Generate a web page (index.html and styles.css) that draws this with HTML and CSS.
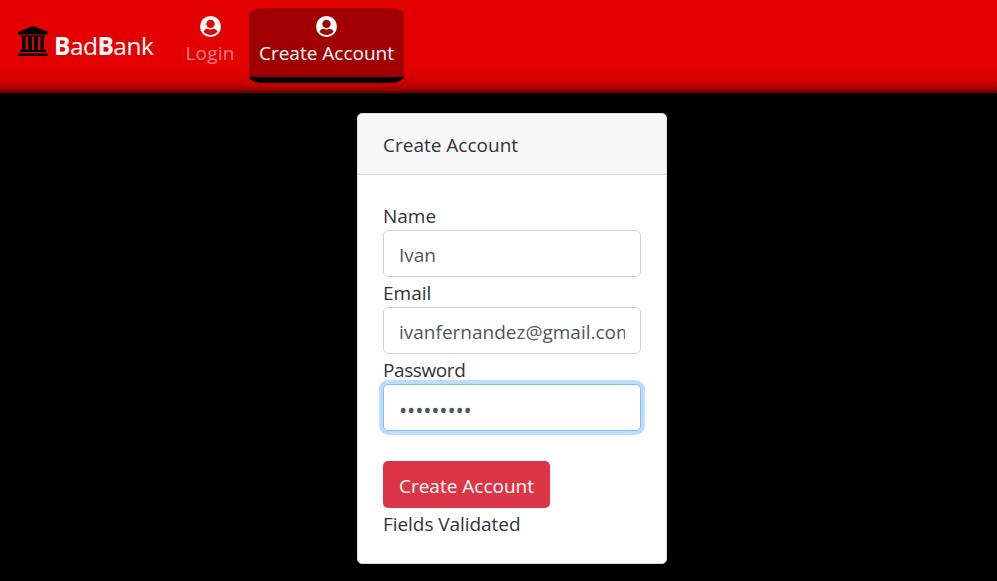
FILE: index.html
```html
<!DOCTYPE html>
<html lang="en">
<head>
<meta charset="utf-8">
<title>BadBank</title>
<link rel="stylesheet" href="styles.css">
</head>
<body>
<nav class="navbar">
  <a class="brand">
    <svg class="bank" viewBox="0 0 30 30"><path d="M15 0 30 6v2.500H0V6zM3 9.500h24v1.500H3zM4 11h3.500v13H4zM10 11h4v13h-4zM16 11h4v13h-4zM22.500 11H26v13h-3.500zM2 24h26v2H2zM0 27.500h30V30H0z"/></svg>
    <span class="brand-name"><b>B</b>ad<b>B</b>ank</span>
  </a>
  <a class="nav-link login">
    <svg class="user" viewBox="0 0 20 20"><circle cx="10" cy="10" r="10" fill="#fff"/><circle cx="10" cy="7.500" r="4" fill="#e30000"/><path d="M3.300 14.700Q4.500 12.100 7 12.100Q10 13.400 13 12.100Q15.500 12.100 16.700 14.700A8.300 8.300 0 0 1 3.300 14.700z" fill="#e30000"/></svg>
    <span>Login</span>
  </a>
  <a class="nav-link active">
    <svg class="user" viewBox="0 0 20 20"><circle cx="10" cy="10" r="10" fill="#fff"/><circle cx="10" cy="7.500" r="4" fill="#a00000"/><path d="M3.300 14.700Q4.500 12.100 7 12.100Q10 13.400 13 12.100Q15.500 12.100 16.700 14.700A8.300 8.300 0 0 1 3.300 14.700z" fill="#a00000"/></svg>
    <span>Create Account</span>
  </a>
</nav>
<main class="card">
  <div class="card-header"><span>Create Account</span></div>
  <div class="card-body">
    <label>Name</label>
    <input class="field" type="text" value="Ivan">
    <label>Email</label>
    <input class="field" type="text" value="ivanfernandez@gmail.com">
    <label class="tight">Password</label>
    <input class="field focused" type="password" value="password1">
    <button class="submit" type="button">Create Account</button>
    <div class="status">Fields Validated</div>
  </div>
</main>
</body>
</html>
```

FILE: styles.css
```css
* { box-sizing: border-box; }
body {
  margin: 0;
  height: 581px;
  overflow: hidden;
  background: #000;
  color: #212529;
  font: 400 19px/30px "Open Sans", "Noto Sans", sans-serif;
}
.navbar {
  display: flex;
  align-items: flex-start;
  height: 93px;
  padding: 8px 18px;
  background: linear-gradient(#e30000 68px, #d20000 80px, #bd0000 86px, #900000 90px, #600000 93px);
  color: #fff;
}
.brand { display: flex; width: 158px; padding-top: 18px; }
.bank { width: 30px; height: 30px; flex: none; }
.brand-name {
  margin-left: 6px;
  padding-top: 5px;
  font-size: 24.5px;
  line-height: 30px;
  letter-spacing: -0.55px;
  white-space: nowrap;
}
.nav-link {
  display: flex;
  flex-direction: column;
  align-items: center;
  height: 75px;
  padding-top: 8px;
  line-height: 33px;
  white-space: nowrap;
}
.user { width: 21px; height: 21px; flex: none; }
.login { width: 68px; color: #ff8080; letter-spacing: 0.2px; }
.active {
  width: 155px;
  margin-left: 5px;
  background: #a00000;
  border-bottom: 6px solid #000;
  border-radius: 14px / 7px;
}
.card {
  width: 310px;
  height: 451px;
  margin: 20px 0 0 357px;
  background: #fff;
  border: 1px solid #dfdfdf;
  border-radius: 5px;
  overflow: hidden;
  color: #30343a;
}
.card-header {
  height: 61px;
  padding: 16px 25px;
  background: #f7f7f7;
  border-bottom: 1px solid #d5d5d5;
}
.card-body { padding: 25px 25px; }
label { display: block; height: 30px; line-height: 32px; }
.tight { letter-spacing: -0.4px; }
.field {
  display: block;
  width: 258px;
  height: 47px;
  padding: 2px 15px 0;
  border: 1px solid #ced4da;
  border-radius: 5px;
  background: #fff;
  color: #50575e;
  font: inherit;
  outline: none;
}
.focused {
  border-color: #80bdff;
  box-shadow: 0 0 0 4px #bfdeff;
  font-size: 22px;
  letter-spacing: -0.2px;
}
.submit {
  display: block;
  width: 167px;
  height: 47px;
  margin-top: 30px;
  padding: 2px 0 0;
  border: 0;
  border-radius: 5px;
  background: #dc3545;
  color: #fff;
  font: inherit;
  white-space: nowrap;
}
.status { padding-top: 1px; letter-spacing: -0.06px; }
```
